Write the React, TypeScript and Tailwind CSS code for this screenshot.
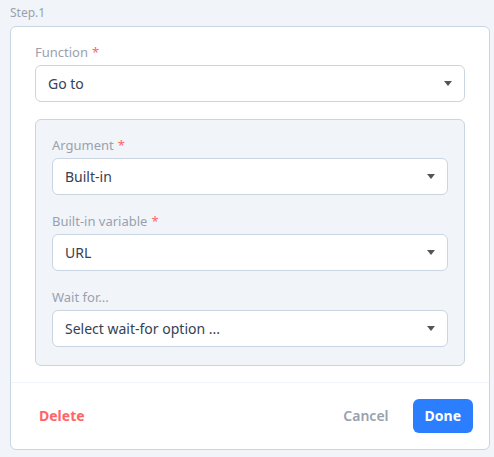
import React from 'react';

function Caret() {
    return (
        <svg width="8" height="5" viewBox="0 0 8 5" className="shrink-0">
            <path d="M0 0h8L4 5z" fill="#555" />
        </svg>
    );
}

function Field({ label, value, required }: { label: string; value: string; required?: boolean }) {
    return (
        <div>
            <div className="text-[13px] leading-[18px] text-gray-400 mb-1">
                {label}
                {required && <span className="text-red-400 ml-1">*</span>}
            </div>
            <div className="flex items-center justify-between h-[37px] pl-3 pr-3 bg-white border border-slate-300 rounded-md">
                <span className="text-sm text-gray-700">{value}</span>
                <Caret />
            </div>
        </div>
    );
}

export default function App() {
    return (
        <div className="min-h-screen bg-slate-100 font-['Noto_Sans',sans-serif] pt-1">
            <div className="text-xs text-gray-400 pl-[10px] h-[22px] leading-[18px]">Step.1</div>

            {/* Step card */}
            <div className="ml-[10px] w-[480px] bg-white border border-slate-300 rounded-md">
                <div className="px-6 pt-4 pb-4">
                    <Field label="Function" value="Go to" required />

                    <div className="mt-[17px] px-4 pt-4 pb-[18px] bg-slate-100 border border-slate-300 rounded-md flex flex-col gap-[17px]">
                        <Field label="Argument" value="Built-in" required />
                        <Field label="Built-in variable" value="URL" required />
                        <Field label="Wait for..." value="Select wait-for option ..." />
                    </div>
                </div>

                {/* Footer */}
                <div className="flex items-center border-t border-slate-100 px-4 h-[67px]">
                    <button className="px-3 text-sm font-bold text-red-400">Delete</button>
                    <div className="ml-auto flex items-center gap-3">
                        <button className="px-3 text-sm font-semibold text-gray-400">Cancel</button>
                        <button className="px-3 h-[34px] rounded-md bg-blue-500 text-sm font-bold text-white">
                            Done
                        </button>
                    </div>
                </div>
            </div>
        </div>
    );
}
